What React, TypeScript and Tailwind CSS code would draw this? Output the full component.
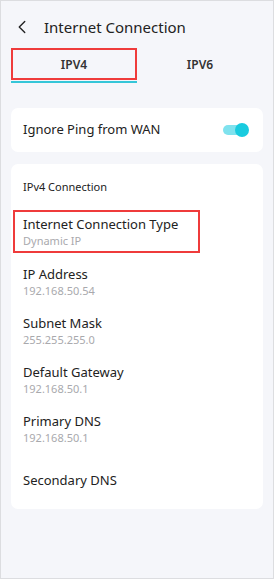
import { ChevronLeft } from 'lucide-react';

const rows = [
  { label: 'IP Address', value: '192.168.50.54' },
  { label: 'Subnet Mask', value: '255.255.255.0' },
  { label: 'Default Gateway', value: '192.168.50.1' },
  { label: 'Primary DNS', value: '192.168.50.1' },
];

const Toggle = () => (
  <div className="relative h-[12px] w-[26px]">
    <div className="absolute inset-y-[1px] left-0 right-[2px] rounded-full bg-[#7fe2ee]" />
    <div className="absolute right-0 top-[-1px] h-[14px] w-[14px] rounded-full bg-[#19cbdf]" />
  </div>
);

const App = () => (
  <div className="flex h-[580px] w-[276px] bg-white" style={{ fontFamily: '"Noto Sans", sans-serif' }}>
    <div className="flex h-[579px] w-[274px] flex-col border border-[#dcdde0] bg-[#f5f6fa]">
      <div className="flex h-[47px] items-center pl-[10px] pt-[5px]">
        <ChevronLeft className="h-[22px] w-[22px] text-[#222]" strokeWidth={1.5} />
        <span className="ml-[11px] text-[15px] text-[#222]">Internet Connection</span>
      </div>
      <div className="flex px-[10px]">
        <div className="flex w-[126px] flex-col">
          <div className="flex h-[32px] items-center justify-center border-2 border-[#ef3b3b] pt-[2px] text-[12px] font-semibold text-[#333]">
            IPV4
          </div>
          <div className="mt-[1px] h-[2px] bg-[#35c6d8]" />
        </div>
        <div className="flex h-[32px] flex-1 items-center justify-center pt-[2px] text-[12px] font-semibold text-[#333]">
          IPV6
        </div>
      </div>
      <div className="mx-[10px] mt-[25px] flex h-[44px] items-center justify-between rounded-[7px] bg-white pl-[12px] pr-[14px]">
        <span className="text-[13px] text-[#222]">Ignore Ping from WAN</span>
        <Toggle />
      </div>
      <div className="mx-[10px] mt-[12px] flex flex-col rounded-[7px] bg-white pb-[20px]">
        <div className="pl-[12px] pt-[15px] text-[11px] text-[#222]">IPv4 Connection</div>
        <div className="ml-[2px] mt-[14px] flex h-[43px] w-[187px] flex-col justify-center border-2 border-[#ef3b3b] pl-[8px]">
          <span className="text-[13px] leading-[18px] text-[#222]">Internet Connection Type</span>
          <span className="mt-[1px] text-[11px] leading-[14px] text-[#a9a9ad]">Dynamic IP</span>
        </div>
        {rows.map((r) => (
          <div key={r.label} className="mt-[8px] flex h-[41px] flex-col justify-center pl-[12px]">
            <span className="text-[13px] leading-[18px] text-[#222]">{r.label}</span>
            <span className="mt-[1px] text-[11px] leading-[14px] text-[#a9a9ad]">{r.value}</span>
          </div>
        ))}
        <div className="mt-[22px] pl-[12px] text-[13px] leading-[18px] text-[#222]">Secondary DNS</div>
      </div>
    </div>
  </div>
);

export default App;
